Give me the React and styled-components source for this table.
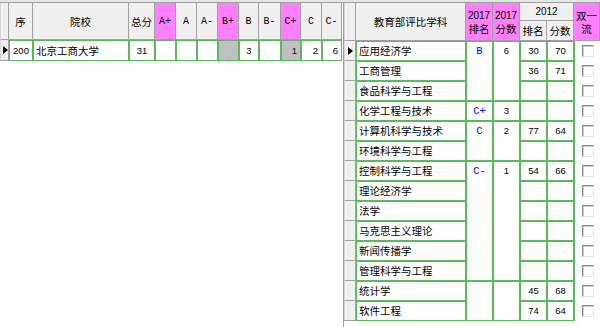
import React from "react";
import styled, { createGlobalStyle } from "styled-components";

const GlobalStyle = createGlobalStyle`
  html, body { margin: 0; padding: 0; background: #fff; }
  * { box-sizing: border-box; }
`;

const GREEN = "#5cb85c";
const GRID_GRAY = "#a0a0a0";
const FACE = "#f0f0f0";
const PINK = "#ff80ff";

const cjk = `"Noto Sans CJK SC", "Noto Sans", sans-serif`;
const mono = `"Liberation Mono", "DejaVu Sans Mono", monospace`;
const sans = `"Liberation Sans", Arial, sans-serif`;

const Page = styled.div`
  width: 600px;
  height: 327px;
  overflow: hidden;
  display: flex;
  flex-direction: column;
  background: #fff;
  font-family: ${cjk};
  color: #000;
`;

const TopStrip = styled.div`
  height: 3px;
  background: #e6e6e6;
  border-bottom: 1px solid ${GRID_GRAY};
`;

const Panels = styled.div`
  flex: 1;
  display: flex;
  min-height: 0;
`;

const LeftPanel = styled.div`
  width: 343px;
  background: #fff;
`;

const RightPanel = styled.div`
  flex: 1;
  border-left: 1px solid ${GRID_GRAY};
  background: #fff;
`;

const LeftGrid = styled.div`
  display: grid;
  grid-template-columns: 9px 24px 96px 26px 21px 21px 21px 21px 20px 22px 20px 21px 20px;
  grid-template-rows: 37px 21px;
`;

const RightGrid = styled.div`
  display: grid;
  grid-template-columns: 12px 110px 27px 27px 27px 27px 1fr;
  grid-template-rows: 18px 20px repeat(14, 20px);
`;

const placed = (p) =>
  p.$col
    ? `grid-column: ${p.$col} / span ${p.$colSpan || 1}; grid-row: ${p.$row} / span ${p.$rowSpan || 1};`
    : "";

const HeadCell = styled.div`
  ${placed}
  display: flex;
  align-items: center;
  justify-content: center;
  text-align: center;
  background: ${(p) => (p.$pink ? PINK : FACE)};
  border-right: 1px solid ${GRID_GRAY};
  border-bottom: 1px solid ${GRID_GRAY};
  font-family: ${(p) => (p.$latin ? mono : cjk)};
  font-size: ${(p) => (p.$latin ? "10px" : "10.5px")};
  line-height: 13px;
  white-space: pre-line;
  overflow: hidden;
`;

const Year = styled.span`
  font-family: ${sans};
  font-size: 10px;
`;

const Indicator = styled.div`
  ${placed}
  background: ${FACE};
  border-right: 1px solid ${GRID_GRAY};
  border-bottom: 1px solid ${GRID_GRAY};
  border-left: 1px solid #d8d8d8;
  display: flex;
  align-items: center;
  justify-content: center;
`;

const Arrow = styled.span`
  width: 0;
  height: 0;
  border-top: 4.5px solid transparent;
  border-bottom: 4.5px solid transparent;
  border-left: 5px solid #000;
  margin-left: 1px;
`;

const Cell = styled.div`
  ${placed}
  display: flex;
  align-items: ${(p) => (p.$top ? "flex-start" : "center")};
  justify-content: ${(p) =>
    p.$align === "left" ? "flex-start" : p.$align === "right" ? "flex-end" : "center"};
  padding: ${(p) => (p.$align === "left" ? "0 0 0 2px" : p.$align === "right" ? "0 3px 0 0" : "0")};
  border: 1px solid ${GREEN};
  background: ${(p) => (p.$shade ? "#c0c0c0" : "#fff")};
  font-size: 10.5px;
  line-height: 18px;
  white-space: nowrap;
  overflow: hidden;
`;

const Num = styled.span`
  font-family: ${sans};
  font-size: 9.5px;
`;

const Grade = styled.span`
  font-family: ${mono};
  font-size: 10.5px;
  color: #0000ff;
`;

const CheckCell = styled.div`
  ${placed}
  display: flex;
  align-items: center;
  justify-content: center;
  border-left: 1px solid ${GREEN};
  background: #fff;
`;

const CheckBox = styled.span`
  width: 12px;
  height: 12px;
  background: #fff;
  border-top: 1px solid #8a8a8a;
  border-left: 1px solid #8a8a8a;
  border-right: 1px solid #e2e2e2;
  border-bottom: 1px solid #e2e2e2;
  box-shadow: inset 1px 1px 0 #cfcfcf;
  margin-left: 1px;
`;

const grades = [
  { label: "A+", pink: true },
  { label: "A" },
  { label: "A-" },
  { label: "B+", pink: true },
  { label: "B" },
  { label: "B-" },
  { label: "C+", pink: true },
  { label: "C" },
  { label: "C-" },
];

const schoolCounts = [
  { v: "" },
  { v: "" },
  { v: "" },
  { v: "", shade: true },
  { v: "3" },
  { v: "" },
  { v: "1", shade: true, align: "right" },
  { v: "2", align: "right" },
  { v: "6", align: "right" },
];

const subjects = [
  { name: "应用经济学", r12: "30", s12: "70" },
  { name: "工商管理", r12: "36", s12: "71" },
  { name: "食品科学与工程" },
  { name: "化学工程与技术" },
  { name: "计算机科学与技术", r12: "77", s12: "64" },
  { name: "环境科学与工程" },
  { name: "控制科学与工程", r12: "54", s12: "66" },
  { name: "理论经济学" },
  { name: "法学" },
  { name: "马克思主义理论" },
  { name: "新闻传播学" },
  { name: "管理科学与工程" },
  { name: "统计学", r12: "45", s12: "68" },
  { name: "软件工程", r12: "74", s12: "64" },
];

// 2017 rank / score cells are merged across several subject rows
const groups2017 = [
  { start: 0, span: 3, grade: "B", score: "6" },
  { start: 3, span: 1, grade: "C+", score: "3" },
  { start: 4, span: 2, grade: "C", score: "2" },
  { start: 6, span: 6, grade: "C-", score: "1" },
  { start: 12, span: 2, grade: "", score: "" },
];

function SchoolTable() {
  return (
    <LeftGrid>
      <Indicator />
      <HeadCell>序</HeadCell>
      <HeadCell>院校</HeadCell>
      <HeadCell>总分</HeadCell>
      {grades.map((g) => (
        <HeadCell key={g.label} $pink={g.pink} $latin>
          {g.label}
        </HeadCell>
      ))}

      <Indicator>
        <Arrow />
      </Indicator>
      <Cell>
        <Num>200</Num>
      </Cell>
      <Cell $align="left">北京工商大学</Cell>
      <Cell>
        <Num>31</Num>
      </Cell>
      {schoolCounts.map((c, i) => (
        <Cell key={i} $shade={c.shade} $align={c.align}>
          <Num>{c.v}</Num>
        </Cell>
      ))}
    </LeftGrid>
  );
}

function SubjectTable() {
  return (
    <RightGrid>
      <Indicator $col={1} $row={1} $rowSpan={2} />
      <HeadCell $col={2} $row={1} $rowSpan={2}>
        教育部评比学科
      </HeadCell>
      <HeadCell $col={3} $row={1} $rowSpan={2} $pink>
        <div>
          <Year>2017</Year>
          <br />
          排名
        </div>
      </HeadCell>
      <HeadCell $col={4} $row={1} $rowSpan={2} $pink>
        <div>
          <Year>2017</Year>
          <br />
          分数
        </div>
      </HeadCell>
      <HeadCell $col={5} $row={1} $colSpan={2}>
        <Year>2012</Year>
      </HeadCell>
      <HeadCell $col={5} $row={2}>
        排名
      </HeadCell>
      <HeadCell $col={6} $row={2}>
        分数
      </HeadCell>
      <HeadCell $col={7} $row={1} $rowSpan={2} $pink>
        {"双一\n流"}
      </HeadCell>

      {subjects.map((s, i) => (
        <React.Fragment key={s.name}>
          <Indicator $col={1} $row={i + 3}>
            {i === 0 && <Arrow />}
          </Indicator>
          <Cell $col={2} $row={i + 3} $align="left">
            {s.name}
          </Cell>
          <Cell $col={5} $row={i + 3}>
            <Num>{s.r12}</Num>
          </Cell>
          <Cell $col={6} $row={i + 3}>
            <Num>{s.s12}</Num>
          </Cell>
          <CheckCell $col={7} $row={i + 3}>
            <CheckBox />
          </CheckCell>
        </React.Fragment>
      ))}

      {groups2017.map((g) => (
        <React.Fragment key={g.start}>
          <Cell $col={3} $row={g.start + 3} $rowSpan={g.span} $top>
            <Grade>{g.grade}</Grade>
          </Cell>
          <Cell $col={4} $row={g.start + 3} $rowSpan={g.span} $top>
            <Num>{g.score}</Num>
          </Cell>
        </React.Fragment>
      ))}
    </RightGrid>
  );
}

export default function App() {
  return (
    <>
      <GlobalStyle />
      <Page>
        <TopStrip />
        <Panels>
          <LeftPanel>
            <SchoolTable />
          </LeftPanel>
          <RightPanel>
            <SubjectTable />
          </RightPanel>
        </Panels>
      </Page>
    </>
  );
}
